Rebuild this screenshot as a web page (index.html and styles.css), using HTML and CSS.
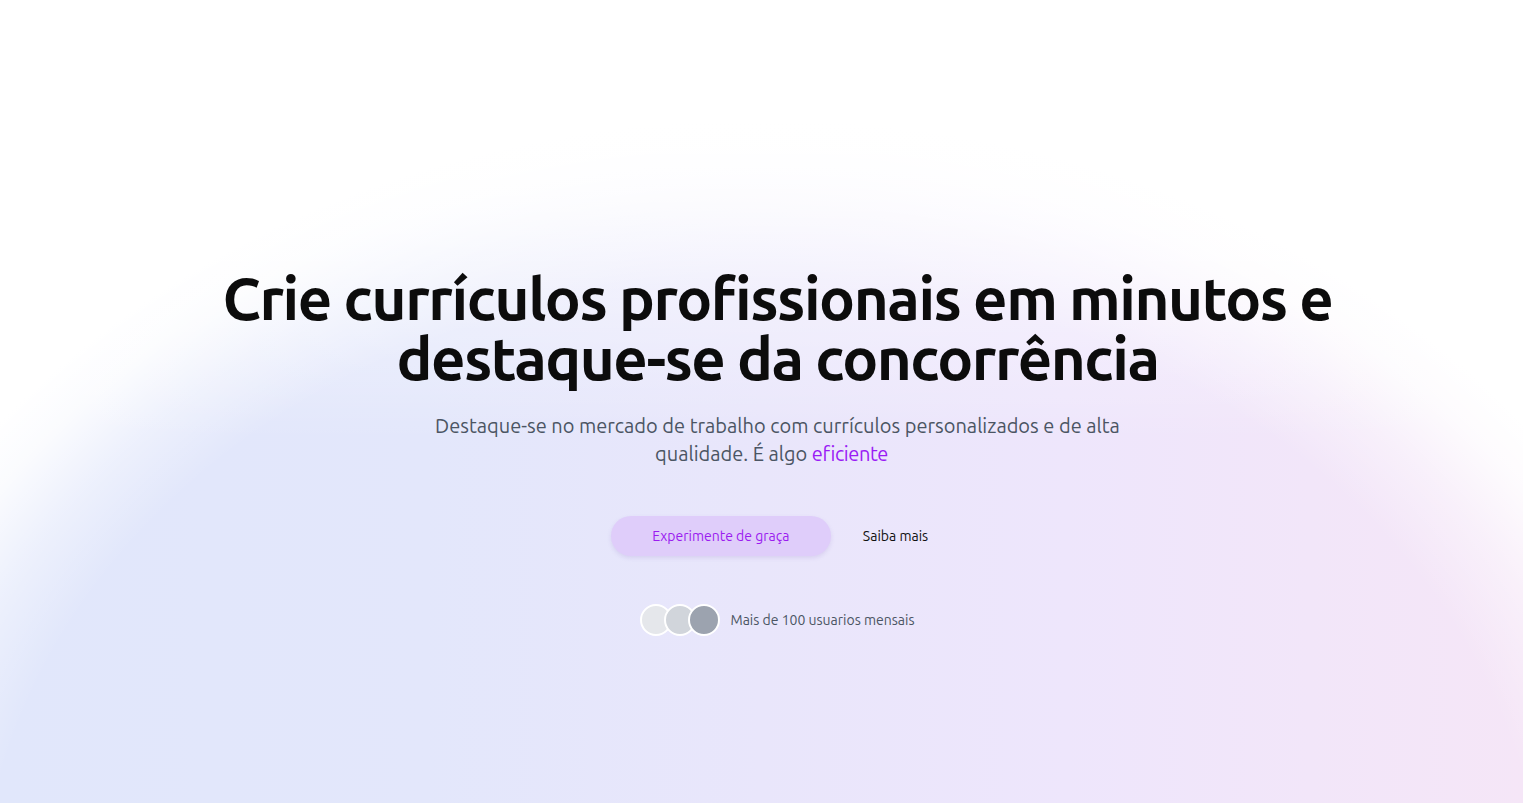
FILE: index.html
```html
<!DOCTYPE html>
<html lang="pt-BR">
<head>
<meta charset="utf-8">
<title>Currículos</title>
<link rel="stylesheet" href="styles.css">
</head>
<body>
<main class="hero">
  <div class="hero-inner">
    <h1 class="title">Crie currículos profissionais em minutos e destaque-se da concorrência</h1>
    <p class="lead">Destaque-se no mercado de trabalho com currículos personalizados e de alta qualidade. É algo <span class="accent">eficiente</span><span class="cursor" aria-hidden="true"></span></p>
    <div class="actions">
      <a class="btn btn-primary" href="#">Experimente de graça</a>
      <a class="btn btn-link" href="#">Saiba mais</a>
    </div>
    <div class="social">
      <div class="avatars">
        <span class="avatar a1"></span>
        <span class="avatar a2"></span>
        <span class="avatar a3"></span>
      </div>
      <span class="social-text">Mais de 100 usuarios mensais</span>
    </div>
  </div>
</main>
</body>
</html>
```
FILE: styles.css
```css
* { box-sizing: border-box; }
html, body { margin: 0; padding: 0; }
body {
  font-family: "Ubuntu", "Noto Sans", "Open Sans", sans-serif;
  background: #ffffff;
  color: #111;
}
.hero {
  min-height: 803px;
  display: flex;
  justify-content: center;
  padding-top: 268px;
  padding-left: 32px;
  background:
    linear-gradient(to bottom, #ffffff 0, #ffffff 100px, rgba(255,255,255,0.5) 260px, rgba(255,255,255,0) 440px),
    radial-gradient(ellipse 64% 100% at 50% 115%, rgba(255,255,255,0) 80%, rgba(255,255,255,0.4) 88%, rgba(255,255,255,0.85) 95%, #ffffff 100%),
    linear-gradient(90deg, #e1e7fb 0%, #e3e7fb 28%, #e9e6fb 50%, #eee6fc 70%, #f2e6f9 86%, #f5e6f7 100%);
}
.hero-inner {
  display: flex;
  flex-direction: column;
  align-items: center;
  text-align: center;
}
.title {
  margin: 0;
  max-width: 1152px;
  font-size: 60px;
  line-height: 60px;
  font-weight: 700;
  letter-spacing: -0.025em;
  color: #0c0c0c;
}
.lead {
  margin: 24px 0 0;
  max-width: 700px;
  font-size: 20px;
  line-height: 28px;
  color: #4b5563;
}
.accent {
  color: #9a1bf5;
  letter-spacing: -0.02em;
}
.cursor {
  display: inline-block;
  width: 12px;
}
.actions {
  margin-top: 48px;
  display: flex;
  align-items: center;
  gap: 16px;
}
.btn {
  font-size: 14px;
  text-decoration: none;
  line-height: 20px;
}
.btn-primary {
  width: 220px;
  height: 40px;
  display: flex;
  align-items: center;
  justify-content: center;
  border-radius: 999px;
  background: #dfcdfa;
  color: #9b1cf0;
  box-shadow: 0 2px 4px rgba(120, 90, 180, 0.15);
}
.btn-link {
  color: #111;
  padding: 10px 16px;
}
.social {
  margin-top: 48px;
  display: flex;
  align-items: center;
  gap: 10px;
}
.avatars {
  display: flex;
}
.avatar {
  width: 32px;
  height: 32px;
  border-radius: 50%;
  border: 2px solid #fff;
  margin-left: -8px;
}
.avatar.a1 { margin-left: 0; background: #e5e7eb; }
.avatar.a2 { background: #d1d5db; }
.avatar.a3 { background: #9ca3af; }
.social-text {
  font-size: 14px;
  color: #4b5563;
}
```
